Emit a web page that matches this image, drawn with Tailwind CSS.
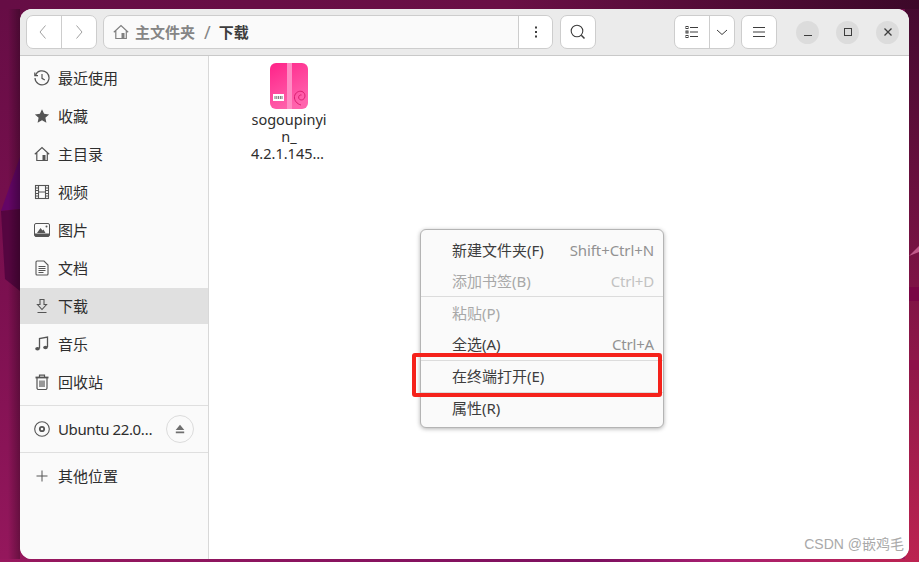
<!DOCTYPE html>
<html lang="zh-CN">
<head>
    <meta charset="UTF-8">
    <title>下载</title>
    <script src="https://cdn.jsdelivr.net/npm/@tailwindcss/browser@4"></script>
</head>
<body class="relative w-[919px] h-[562px] overflow-hidden bg-[#7a1050] font-['Noto_Sans','Noto_Sans_CJK_SC',sans-serif] text-[15px] text-[#3d3d3d]">
    <!-- wallpaper -->
    <svg class="absolute inset-0" width="919" height="562" viewBox="0 0 919 562">
        <defs>
            <linearGradient id="wall" x1="0" y1="0" x2="0.25" y2="1">
                <stop offset="0" stop-color="#660d45"/>
                <stop offset="0.5" stop-color="#7c1050"/>
                <stop offset="1" stop-color="#98185e"/>
            </linearGradient>
            <linearGradient id="wallRight" x1="0" y1="0" x2="0" y2="1">
                <stop offset="0" stop-color="#43092f"/>
                <stop offset="0.5" stop-color="#7d1345"/>
                <stop offset="1" stop-color="#bc2350"/>
            </linearGradient>
            <linearGradient id="wallTop" x1="0" y1="0" x2="1" y2="0">
                <stop offset="0" stop-color="#660d45"/>
                <stop offset="0.55" stop-color="#6a0f45"/>
                <stop offset="1" stop-color="#3c0829"/>
            </linearGradient>
            <linearGradient id="wallBottom" x1="0" y1="0" x2="1" y2="0">
                <stop offset="0" stop-color="#98185e"/>
                <stop offset="0.65" stop-color="#7e1060"/>
                <stop offset="0.78" stop-color="#a81f70"/>
                <stop offset="1" stop-color="#bc2350"/>
            </linearGradient>
            <linearGradient id="shade" x1="0" y1="0" x2="1" y2="0">
                <stop offset="0" stop-color="#000" stop-opacity="0"/>
                <stop offset="1" stop-color="#000" stop-opacity="0.3"/>
            </linearGradient>
            <linearGradient id="pinkBox" x1="0" y1="0" x2="0.5" y2="1">
                <stop offset="0" stop-color="#ff2288"/>
                <stop offset="1" stop-color="#ff63ad"/>
            </linearGradient>
        </defs>
        <rect width="919" height="562" fill="url(#wall)"/>
        <rect x="905" width="14" height="562" fill="url(#wallRight)"/>
        <polygon points="1,211 20,157 20,209" fill="#640566"/>
        <polygon points="1,211 20,209 20,291 5,279" fill="#550540"/>
        <polygon points="909,256 919,246 919,252" fill="#c05a8a"/>
        <rect x="909" y="287" width="10" height="14" fill="#7a0545"/>
        <rect x="909" y="360" width="10" height="10" fill="#8e0f4a"/>
        <rect x="8" width="12" height="562" fill="url(#shade)"/>
        <rect width="919" height="9" fill="url(#wallTop)"/>
        <rect y="559" width="919" height="3" fill="url(#wallBottom)"/>
    </svg>

    <!-- window -->
    <div class="absolute left-[20px] top-[9px] w-[889px] h-[550px] flex flex-col overflow-hidden rounded-[12px] bg-white">
        <header class="h-[47px] shrink-0 flex items-center pl-[6px] pr-[10px] bg-[#ebebeb] border-b border-[#c9c9c9]">
            <div class="w-[71px] h-[34px] flex bg-white border border-[#cdcdcd] rounded-[7px]">
                <div class="w-[35px] flex items-center justify-center border-r border-[#cdcdcd]">
                    <svg width="16" height="16" viewBox="0 0 16 16" fill="none" stroke="#a0a0a0" stroke-width="1"><path d="M9.500 1.500 4 8l5.500 6.500"/></svg>
                </div>
                <div class="flex-1 flex items-center justify-center">
                    <svg width="16" height="16" viewBox="0 0 16 16" fill="none" stroke="#a0a0a0" stroke-width="1"><path d="M5.500 1.500 11 8l-5.500 6.500"/></svg>
                </div>
            </div>
            <div class="ml-[6px] w-[450px] h-[34px] flex bg-[#fafafa] border border-[#cdcdcd] rounded-[7px]">
                <div class="flex-1 flex items-center pl-[9px] overflow-hidden">
                    <svg width="16" height="16" viewBox="0 0 16 16" fill="none" stroke="#7f7f7f" stroke-width="1.200"><path d="M.8 8.200 8 1.500l7.200 6.700M2.800 7v7.500h10.500V7"/><rect x="8.500" y="9" width="3" height="5.500" fill="#7f7f7f" stroke="none"/></svg>
                    <span class="ml-[6px] font-bold text-[#858585]">主文件夹</span>
                    <span class="ml-[9px] text-[18px] leading-[18px] text-[#858585]">/</span>
                    <span class="ml-[8px] font-bold text-[#3d3d3d]">下载</span>
                </div>
                <div class="w-[34px] bg-white rounded-r-[7px] flex items-center justify-center border-l border-[#cdcdcd]">
                    <svg width="4" height="12" viewBox="0 0 4 12" fill="#3d3d3d"><rect x="1" y="0.500" width="2" height="2"/><rect x="1" y="5" width="2" height="2"/><rect x="1" y="9.500" width="2" height="2"/></svg>
                </div>
            </div>
            <div class="ml-[7px] w-[36px] h-[34px] flex items-center justify-center bg-white border border-[#cdcdcd] rounded-[7px]">
                <svg width="16" height="16" viewBox="0 0 16 16" fill="none" stroke="#3d3d3d" stroke-width="1.100"><circle cx="7" cy="7" r="5.800"/><path d="m11.300 11.300 3.200 3.200" stroke-width="1.500"/></svg>
            </div>
            <div class="flex-1"></div>
            <div class="w-[61px] h-[34px] flex bg-white border border-[#cdcdcd] rounded-[7px]">
                <div class="w-[35px] flex items-center justify-center border-r border-[#cdcdcd]">
                    <svg width="14" height="14" viewBox="0 0 14 14" fill="none" stroke="#3d3d3d" stroke-width="1"><rect x="1" y="1.500" width="2" height="2"/><rect x="1" y="6" width="2" height="2"/><rect x="1" y="10.500" width="2" height="2"/><path d="M5 2.500h8M5 7h8M5 11.500h8"/></svg>
                </div>
                <div class="flex-1 flex items-center justify-center">
                    <svg width="12" height="12" viewBox="0 0 12 12" fill="none" stroke="#3d3d3d" stroke-width="1"><path d="M1 4l5 4.500L11 4"/></svg>
                </div>
            </div>
            <div class="ml-[6px] w-[36px] h-[34px] flex items-center justify-center bg-white border border-[#cdcdcd] rounded-[7px]">
                <svg width="14" height="12" viewBox="0 0 14 12" fill="none" stroke="#3d3d3d" stroke-width="1"><path d="M1 1.500h12M1 6h12M1 10.500h12"/></svg>
            </div>
            <div class="ml-[19px] flex gap-[17px]">
                <div class="w-[23px] h-[23px] rounded-full bg-[#dcdcdc] flex items-center justify-center">
                    <svg width="10" height="10" viewBox="0 0 10 10" fill="none" stroke="#3d3d3d" stroke-width="1"><path d="M1 8.500h8"/></svg>
                </div>
                <div class="w-[23px] h-[23px] rounded-full bg-[#dcdcdc] flex items-center justify-center">
                    <svg width="10" height="10" viewBox="0 0 10 10" fill="none" stroke="#3d3d3d" stroke-width="1"><rect x="1.500" y="1.500" width="7" height="7"/></svg>
                </div>
                <div class="w-[23px] h-[23px] rounded-full bg-[#dcdcdc] flex items-center justify-center">
                    <svg width="10" height="10" viewBox="0 0 10 10" fill="none" stroke="#3d3d3d" stroke-width="1.300"><path d="m1.500 1.500 7 7M8.500 1.500l-7 7"/></svg>
                </div>
            </div>
        </header>

        <div class="flex-1 flex min-h-0">
            <aside class="w-[189px] shrink-0 bg-[#fafafa] border-r border-[#d8d8d8] pt-[4px] text-[#2e2e2e]">
                <nav class="flex flex-col gap-[2px]">
                    <div class="h-9 flex items-center pl-[14px] gap-[8px]">
                        <svg width="16" height="16" viewBox="0 0 16 16" fill="none" stroke="#555" stroke-width="1.200"><path d="M1.500 5.200A7 7 0 1 1 1 8"/><path d="M.8 2.500v3.200H4M8 4v4.300l2.800 1.700"/></svg>
                        <span>最近使用</span>
                    </div>
                    <div class="h-9 flex items-center pl-[14px] gap-[8px]">
                        <svg width="16" height="16" viewBox="0 0 16 16" fill="#555"><path d="M8 1.200l2.100 4.600 5 .6-3.700 3.400 1 4.900L8 12.300l-4.400 2.400 1-4.900L.9 6.400l5-.6z"/></svg>
                        <span>收藏</span>
                    </div>
                    <div class="h-9 flex items-center pl-[14px] gap-[8px]">
                        <svg width="16" height="16" viewBox="0 0 16 16" fill="none" stroke="#555" stroke-width="1.200"><path d="M.8 8.200 8 1.500l7.200 6.700M2.800 7v7.500h10.500V7"/><rect x="8.500" y="9" width="3" height="5.500" fill="#555" stroke="none"/></svg>
                        <span>主目录</span>
                    </div>
                    <div class="h-9 flex items-center pl-[14px] gap-[8px]">
                        <svg width="16" height="16" viewBox="0 0 16 16" fill="none" stroke="#555" stroke-width="1.100"><rect x="1.500" y="1.500" width="13" height="13"/><path d="M4.500 1.500v13M11.500 1.500v13M4.500 8h7"/><path d="M1.500 4h3M1.500 6.500h3M1.500 9.500h3M1.500 12h3M11.500 4h3M11.500 6.500h3M11.500 9.500h3M11.500 12h3"/></svg>
                        <span>视频</span>
                    </div>
                    <div class="h-9 flex items-center pl-[14px] gap-[8px]">
                        <svg width="16" height="16" viewBox="0 0 16 16"><rect x="0.500" y="1.500" width="15" height="13" rx="1.500" fill="none" stroke="#555"/><path d="M1 11.500h14V14a.5.5 0 0 1-.5.500h-13A.5.5 0 0 1 1 14z" fill="#555"/><path d="M3 11 6.500 6l2 2.500 1-1 2 3.500z" fill="#555"/><circle cx="12.500" cy="4.500" r="1" fill="#555"/></svg>
                        <span>图片</span>
                    </div>
                    <div class="h-9 flex items-center pl-[14px] gap-[8px]">
                        <svg width="16" height="16" viewBox="0 0 16 16" fill="none" stroke="#555" stroke-width="1.100"><path d="M3 1h7l4 4v9a1 1 0 0 1-1 1H3a1 1 0 0 1-1-1V2a1 1 0 0 1 1-1z"/><path d="M4.500 6.500h7M4.500 8.500h7M4.500 10.500h7M4.500 12.500h5"/></svg>
                        <span>文档</span>
                    </div>
                    <div class="h-9 flex items-center pl-[14px] gap-[8px] bg-[#e0e0e0]">
                        <svg width="16" height="16" viewBox="0 0 16 16" fill="none" stroke="#555" stroke-width="1.100"><path d="M6 1.500h4v5h2.500L8 11.500 3.500 6.500H6zM3.500 14.500h9"/></svg>
                        <span>下载</span>
                    </div>
                    <div class="h-9 flex items-center pl-[14px] gap-[8px]">
                        <svg width="16" height="16" viewBox="0 0 16 16" fill="none" stroke="#555" stroke-width="1.300"><path d="M5.500 12.500V2.500l8-1.500v10"/><ellipse cx="3.500" cy="12.700" rx="2.300" ry="1.800" fill="#555" stroke="none"/><ellipse cx="11.500" cy="11.500" rx="2.300" ry="1.800" fill="#555" stroke="none"/></svg>
                        <span>音乐</span>
                    </div>
                    <div class="h-9 flex items-center pl-[14px] gap-[8px]">
                        <svg width="16" height="16" viewBox="0 0 16 16" fill="none" stroke="#555" stroke-width="1.200"><path d="M1.500 3.500h13" stroke-width="1.800"/><path d="M5.500 3V1.200h5V3M3 4v10a1.500 1.500 0 0 0 1.500 1.500h7A1.500 1.500 0 0 0 13 14V4M6 6.500v6.500M8 6.500v6.500M10 6.500v6.500"/></svg>
                        <span>回收站</span>
                    </div>
                </nav>
                <div class="mt-[5px] border-t border-[#dfdfdf] pt-[5px] pb-[5px]">
                    <div class="h-9 flex items-center pl-[14px] gap-[8px]">
                        <svg class="shrink-0" width="16" height="16" viewBox="0 0 16 16" fill="none" stroke="#555" stroke-width="1.100"><circle cx="8" cy="8" r="7.300"/><circle cx="8" cy="8" r="2.200" stroke-width="1.800"/></svg>
                        <span class="w-[94px] whitespace-nowrap tracking-[-0.4px]">Ubuntu 22.0…</span>
                        <div class="ml-[6px] w-[28px] h-[28px] rounded-full border border-[#dcdcdc] flex items-center justify-center">
                            <svg width="10" height="10" viewBox="0 0 10 10" fill="#6f6f6f"><path d="M5 .8 9.300 6H.7zM.8 7.500h8.400v1.800H.8z"/></svg>
                        </div>
                    </div>
                </div>
                <div class="border-t border-[#dfdfdf] pt-[5px]">
                    <div class="h-9 flex items-center pl-[14px] gap-[8px]">
                        <svg width="16" height="16" viewBox="0 0 16 16" fill="none" stroke="#555" stroke-width="1"><path d="M8 2.500v11M2.500 8h11"/></svg>
                        <span>其他位置</span>
                    </div>
                </div>
            </aside>

            <main class="flex-1 bg-white pt-[7px]">
                <div class="w-[90px] ml-[35px] flex flex-col items-center">
                    <svg width="38" height="46" viewBox="0 0 38 46">
                        <rect width="38" height="46" rx="6" fill="url(#pinkBox)"/>
                        <rect x="17" width="5" height="46" fill="#ff8cc4"/>
                        <rect x="3" y="31" width="11" height="7" fill="#fff"/>
                        <path d="M5 33v3M6.800 33v3M8.600 33v3M10.400 33v3M12 33v3" stroke="#777" stroke-width="1"/>
                        <path d="M31 42c-4-1-7-4.500-6.500-8.500.5-4 4.500-6 7.500-5 3 1 3.800 5 2 7.200-1.600 2-4.800 1.500-5.300-.7-.4-1.800 1-3.500 2.800-3" fill="none" stroke="#d91f70" stroke-width="1"/>
                    </svg>
                    <div class="mt-[2px] text-center whitespace-nowrap text-[14.5px] leading-[17px] text-[#2e2e2e]">
                        <div>sogoupinyi</div>
                        <div>n_</div>
                        <div class="pr-[3px]">4.2.1.145…</div>
                    </div>
                </div>
            </main>
        </div>
    </div>

    <!-- context menu -->
    <div class="absolute left-[420px] top-[229px] w-[244px] h-[199px] pt-[5px] bg-[#fafafa] border border-[#b4b4b4] rounded-[6px] shadow-[0_1px_4px_rgba(0,0,0,0.3)]">
        <div class="h-[31px] flex items-center justify-between pl-[31px] pr-[9px]"><span>新建文件夹(F)</span><span class="tracking-[-0.1px] text-[#929292]">Shift+Ctrl+N</span></div>
        <div class="h-[30px] flex items-center justify-between pl-[31px] pr-[9px] text-[#a8a8a8]"><span>添加书签(B)</span><span class="tracking-[-0.2px] text-[#c2c2c2]">Ctrl+D</span></div>
        <div class="border-t border-[#dcdcdc] h-[33px] flex items-center pl-[31px] text-[#a8a8a8]"><span>粘贴(P)</span></div>
        <div class="h-[31px] flex items-center justify-between pl-[31px] pr-[9px]"><span>全选(A)</span><span class="tracking-[-0.2px] text-[#929292]">Ctrl+A</span></div>
        <div class="border-t border-[#dcdcdc] h-[32px] flex items-center pl-[31px]"><span>在终端打开(E)</span></div>
        <div class="border-t border-[#dcdcdc] h-[32px] flex items-center pl-[31px]"><span>属性(R)</span></div>
    </div>

    <!-- red annotation box -->
    <div class="absolute left-[412px] top-[353px] w-[250px] h-[44px] border-[4px] border-[#f5221b] rounded-[3px]"></div>

    <!-- watermark -->
    <div class="absolute right-[15px] top-[535px] font-['Liberation_Sans','Noto_Sans_CJK_SC',sans-serif] text-[14px] leading-[18px] text-[#a9a9a9]">CSDN @嵌鸡毛</div>
</body>
</html>
